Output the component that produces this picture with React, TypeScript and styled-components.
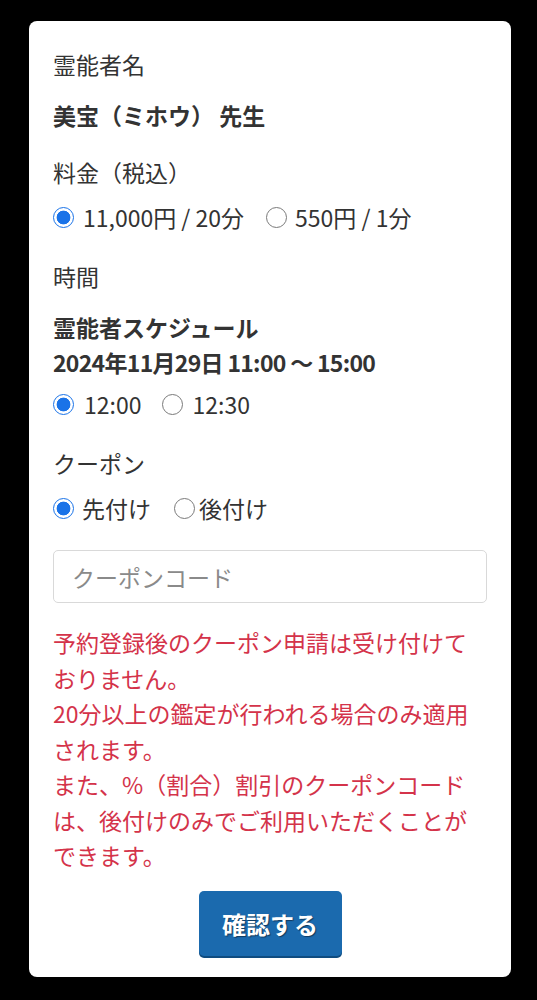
import React, { useState } from 'react';
import styled, { createGlobalStyle } from 'styled-components';

const GlobalStyle = createGlobalStyle`
  html, body {
    margin: 0;
    padding: 0;
    background: #000;
  }
  body {
    font-family: "Noto Sans CJK JP", "Noto Sans", sans-serif;
    color: #333;
  }
  * {
    box-sizing: border-box;
  }
`;

const Page = styled.div`
  padding: 21px 26px 23px 29px;
  min-height: 1000px;
`;

const Card = styled.form`
  background: #fff;
  border-radius: 8px;
  padding: 26px 24px 21px 24px;
  font-size: 23px;
  line-height: 35px;
`;

const Field = styled.div<{ $mb?: number }>`
  margin-bottom: ${(p) => p.$mb ?? 24}px;
`;

const Label = styled.div<{ $gap?: number }>`
  margin-bottom: ${(p) => p.$gap ?? 10}px;
`;

const Strong = styled.div<{ $tight?: boolean }>`
  font-weight: 700;
  letter-spacing: ${(p) => (p.$tight ? '-0.7px' : 'normal')};
`;

const RadioRow = styled.div<{ $gap: number; $top?: number }>`
  display: flex;
  align-items: center;
  gap: ${(p) => p.$gap}px;
  margin-top: ${(p) => p.$top ?? 0}px;
`;

const Option = styled.label<{ $gap: number }>`
  display: inline-flex;
  align-items: center;
  gap: ${(p) => p.$gap}px;
  cursor: pointer;
`;

const Radio = styled.input.attrs({ type: 'radio' })`
  appearance: none;
  -webkit-appearance: none;
  margin: 0;
  width: 21px;
  height: 21px;
  border-radius: 50%;
  border: 1.3px solid #7a7a7a;
  background: #fff;
  flex: none;

  &:checked {
    border: 1.5px solid #1a73e8;
    background: radial-gradient(circle, #1a73e8 0 6.6px, #fff 7.2px);
  }
`;

const CodeInput = styled.input`
  display: block;
  width: 100%;
  height: 53px;
  border: 1px solid #d9d9d9;
  border-radius: 5px;
  padding: 0 18px;
  font: inherit;
  color: #333;
  margin-top: 24px;
  outline: none;

  &::placeholder {
    color: #8a8a8a;
  }
`;

const Notice = styled.p`
  margin: 22px 0 0;
  color: #d4334a;
  line-height: 35.5px;
`;

const Actions = styled.div`
  display: flex;
  justify-content: center;
  margin-top: 17.5px;
`;

const Submit = styled.button`
  width: 143px;
  height: 65px;
  border: none;
  border-radius: 5px;
  background: #1b6aae;
  box-shadow: 0 2px 0 #0f4c80;
  color: #fff;
  font: inherit;
  font-size: 24px;
  font-weight: 700;
  text-shadow: 1px 1px 1px rgba(0, 0, 0, 0.45);
  cursor: pointer;
`;

const App: React.FC = () => {
  const [price, setPrice] = useState('20');
  const [time, setTime] = useState('1200');
  const [coupon, setCoupon] = useState('pre');

  return (
    <>
      <GlobalStyle />
      <Page>
        <Card onSubmit={(e) => e.preventDefault()}>
          <Field $mb={22}>
            <Label $gap={16}>霊能者名</Label>
            <Strong>美宝（ミホウ） 先生</Strong>
          </Field>

          <Field>
            <Label>料金（税込）</Label>
            <RadioRow $gap={22}>
              <Option $gap={9}>
                <Radio name="price" checked={price === '20'} onChange={() => setPrice('20')} />
                11,000円 / 20分
              </Option>
              <Option $gap={8}>
                <Radio name="price" checked={price === '1'} onChange={() => setPrice('1')} />
                550円 / 1分
              </Option>
            </RadioRow>
          </Field>

          <Field>
            <Label $gap={16}>時間</Label>
            <Strong>霊能者スケジュール</Strong>
            <Strong $tight>2024年11月29日 11:00 〜 15:00</Strong>
            <RadioRow $gap={21} $top={7}>
              <Option $gap={10}>
                <Radio name="time" checked={time === '1200'} onChange={() => setTime('1200')} />
                12:00
              </Option>
              <Option $gap={9}>
                <Radio name="time" checked={time === '1230'} onChange={() => setTime('1230')} />
                12:30
              </Option>
            </RadioRow>
          </Field>

          <div>
            <Label>クーポン</Label>
            <RadioRow $gap={23}>
              <Option $gap={8}>
                <Radio name="coupon" checked={coupon === 'pre'} onChange={() => setCoupon('pre')} />
                先付け
              </Option>
              <Option $gap={4}>
                <Radio name="coupon" checked={coupon === 'post'} onChange={() => setCoupon('post')} />
                後付け
              </Option>
            </RadioRow>
            <CodeInput placeholder="クーポンコード" />
          </div>

          <Notice>
            予約登録後のクーポン申請は受け付けておりません。
            <br />
            20分以上の鑑定が行われる場合のみ適用されます。
            <br />
            また、%（割合）割引のクーポンコードは、後付けのみでご利用いただくことができます。
          </Notice>

          <Actions>
            <Submit type="submit">確認する</Submit>
          </Actions>
        </Card>
      </Page>
    </>
  );
};

export default App;
